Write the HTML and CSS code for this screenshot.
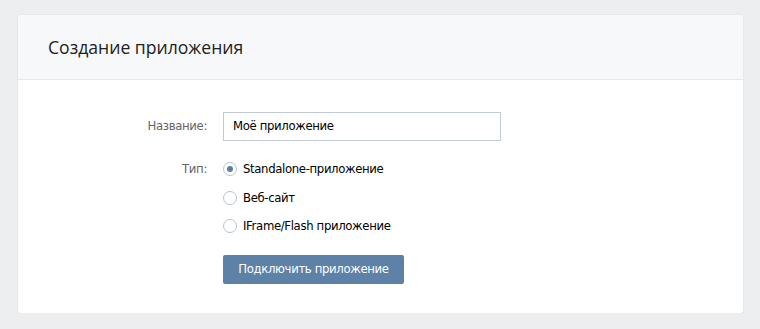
FILE: index.html
```html
<!DOCTYPE html>
<html lang="ru">
<head>
  <meta charset="UTF-8" />
  <title>Создание приложения</title>
  <link rel="stylesheet" href="styles.css">
</head>
<body>
  <div class="page-block">
    <div class="page-block-header">
      <h2>Создание приложения</h2>
    </div>

    <form class="app-form">
      <label class="form-label" for="appName">Название:</label>
      <div class="form-field">
        <input type="text" id="appName" class="text-input" value="Моё приложение" />
      </div>

      <div class="form-label form-label-radio">Тип:</div>
      <div class="form-field radio-list">
        <label class="radio checked"><span class="radio-dot"></span>Standalone-приложение</label>
        <label class="radio"><span class="radio-dot"></span>Веб-сайт</label>
        <label class="radio"><span class="radio-dot"></span>IFrame/Flash приложение</label>
      </div>

      <div></div>
      <div class="form-field">
        <button type="button" class="flat-button">Подключить приложение</button>
      </div>
    </form>
  </div>
</body>
</html>
```

FILE: styles.css
```css
:root {
  --page-bg: #edeef0;
  --header-bg: #f7f8fa;
  --card-bg: #fff;
  --label: #656565;
  --text: #000;
  --accent: #5e81a8;
  --radio-border: #b9c4d0;
  --radio-dot: #5b7fa6;
}

* {
  box-sizing: border-box;
  margin: 0;
  padding: 0;
}

body {
  background: var(--page-bg);
  font-family: 'DejaVu Sans', Tahoma, sans-serif;
  font-size: 11.7px;
  letter-spacing: -0.35px;
  color: var(--text);
  padding: 15px 17px 0 18px;
}

.page-block {
  background: var(--card-bg);
  border-radius: 2px;
  box-shadow: 0 1px 0 0 #d7d8db, 0 0 0 1px #e7e8ec;
  overflow: hidden;
}

.page-block-header {
  background: var(--header-bg);
  border-bottom: 1px solid #e7e8ec;
  height: 65px;
  padding: 0 30px;
  display: flex;
  align-items: center;
}

h2 {
  font-family: 'Open Sans', sans-serif;
  font-size: 17.6px;
  font-weight: 400;
  letter-spacing: 0;
  color: #222;
  padding-bottom: 1px;
}

.app-form {
  display: grid;
  grid-template-columns: 189px 1fr;
  column-gap: 16px;
  padding: 32px 0 29px;
}

.form-label {
  color: var(--label);
  text-align: right;
  height: 29px;
  line-height: 29px;
}

.form-label-radio {
  margin-top: 14px;
  height: 28px;
  line-height: 28px;
}

.text-input {
  width: 278px;
  height: 29px;
  border: 1px solid #c0cad5;
  border-radius: 0;
  padding: 0 9px 1px;
  font-family: inherit;
  font-size: inherit;
  letter-spacing: inherit;
  color: var(--text);
  outline: none;
}

.radio-list {
  margin-top: 14px;
  margin-bottom: 14px;
}

.radio {
  display: flex;
  align-items: center;
  height: 28.5px;
  cursor: pointer;
}

.radio-dot {
  width: 14px;
  height: 14px;
  border: 1px solid var(--radio-border);
  border-radius: 50%;
  margin-right: 6px;
  display: flex;
  align-items: center;
  justify-content: center;
}

.radio.checked .radio-dot::after {
  content: "";
  width: 6px;
  height: 6px;
  border-radius: 50%;
  background: var(--radio-dot);
}

.flat-button {
  width: 181px;
  height: 29px;
  background: var(--accent);
  color: #fff;
  border: none;
  border-radius: 2px;
  font-family: inherit;
  font-size: inherit;
  letter-spacing: inherit;
  cursor: pointer;
}
```
